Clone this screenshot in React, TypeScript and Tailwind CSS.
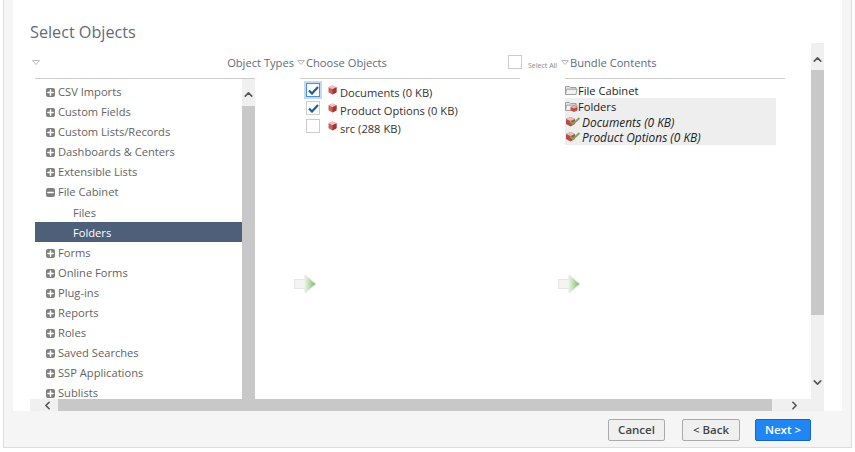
import React from 'react';
import { ChevronUp, ChevronDown, ChevronLeft, ChevronRight, Plus, Minus } from 'lucide-react';

const typesBefore = ['CSV Imports', 'Custom Fields', 'Custom Lists/Records', 'Dashboards & Centers', 'Extensible Lists'];
const typesAfter = ['Forms', 'Online Forms', 'Plug-ins', 'Reports', 'Roles', 'Saved Searches', 'SSP Applications', 'Sublists'];

function Caret({ className = '' }: { className?: string }) {
  return (
    <svg width="8" height="5" viewBox="0 0 8 5" className={`shrink-0 ${className}`}>
      <path d="M0.5 0.5 H7.5 L4 4.5 Z" fill="#fff" stroke="#a8a8b0" strokeWidth="0.8" />
    </svg>
  );
}

function Cube() {
  return (
    <svg width="9" height="10" viewBox="0 0 9 10" className="shrink-0">
      <path d="M4.5 0.5 L8.5 2.3 V7.3 L4.5 9.5 L0.5 7.3 V2.3 Z" fill="#c9605c" />
      <path d="M4.5 0.5 L8.5 2.3 L4.5 4.2 L0.5 2.3 Z" fill="#e8c4c0" />
      <path d="M4.5 4.2 L8.5 2.3 V7.3 L4.5 9.5 Z" fill="#a83232" />
    </svg>
  );
}

function FolderIcon({ withCube = false }: { withCube?: boolean }) {
  return (
    <svg width="13" height="11" viewBox="0 0 13 11" className="shrink-0">
      <path d="M0.5 9.5 V1.5 H4.5 L5.5 2.5 H11 V4" fill="#e4e4e4" stroke="#999" strokeWidth="0.9" />
      <path d="M0.5 9.5 L1.5 4.2 H12 L11 9.5 Z" fill="#f2f2f2" stroke="#999" strokeWidth="0.9" />
      {withCube && (
        <>
          <path d="M9 4.5 L12.5 6 V9.3 L9 11 L5.5 9.3 V6 Z" fill="#c44a46" />
          <path d="M9 4.5 L12.5 6 L9 7.5 L5.5 6 Z" fill="#e3b0ab" />
        </>
      )}
    </svg>
  );
}

function CheckedCube() {
  return (
    <svg width="16" height="11" viewBox="0 0 16 11" className="shrink-0">
      <path d="M5.5 1 L10 3 V8 L5.5 10.5 L1 8 V3 Z" fill="#b94a48" />
      <path d="M5.5 1 L10 3 L5.5 5 L1 3 Z" fill="#e6c0bc" />
      <path d="M5 5.5 L8 8 L14.5 2" fill="none" stroke="#7ea65e" strokeWidth="2" />
    </svg>
  );
}

function GreenArrow() {
  return (
    <svg width="23" height="20" viewBox="0 0 23 20">
      <defs>
        <linearGradient id="arrowFill" x1="0" x2="1" y1="0" y2="0">
          <stop offset="0" stopColor="#f4f4f4" />
          <stop offset="0.45" stopColor="#f2f6f0" />
          <stop offset="0.6" stopColor="#cfe8c6" />
          <stop offset="1" stopColor="#74b85e" />
        </linearGradient>
      </defs>
      <path d="M0.5 5.5 H11 V1 L22 10 L11 19 V14.5 H0.5 Z" fill="url(#arrowFill)" stroke="#e6e6e6" strokeWidth="1" />
    </svg>
  );
}

function TreeIcon({ open = false }: { open?: boolean }) {
  return (
    <span className="flex h-[9px] w-[9px] shrink-0 items-center justify-center rounded-[2px] bg-[#808080] text-white">
      {open ? <Minus size={9} strokeWidth={4} /> : <Plus size={9} strokeWidth={4} />}
    </span>
  );
}

function TreeRow({ label }: { label: string }) {
  return (
    <div className="flex h-5 items-center gap-[3px] pl-[11px] text-[#636363]">
      <TreeIcon />
      <span>{label}</span>
    </div>
  );
}

function ObjectRow({ label, checked, focused, rowClass }: { label: string; checked?: boolean; focused?: boolean; rowClass: string }) {
  return (
    <div className={`flex items-center ${rowClass}`}>
      <span
        className={`flex h-[14px] w-[14px] shrink-0 items-center justify-center border bg-white ${
          focused ? 'border-[#4f8fd0] shadow-[0_0_0_2px_#c3daf0]' : 'border-[#ccc]'
        }`}
      >
        {checked && (
          <svg width="11" height="9" viewBox="0 0 11 9">
            <path d="M1 4.5 L4 7.5 L10 1" fill="none" stroke="#1f5c9e" strokeWidth="2.2" />
          </svg>
        )}
      </span>
      <span className="ml-2">
        <Cube />
      </span>
      <span className="ml-[3px] mt-[6px] text-[#333]">{label}</span>
    </div>
  );
}

function ScrollBtn({ children, className = '' }: { children: React.ReactNode; className?: string }) {
  return <div className={`flex shrink-0 items-center justify-center text-[#555] ${className}`}>{children}</div>;
}

export default function App() {
  return (
    <div
      className="h-[452px] w-[855px] overflow-hidden bg-white pl-[3px] text-[11.15px] leading-4"
      style={{ fontFamily: '"Open Sans", sans-serif' }}
    >
      <div className="flex h-[448px] w-[849px] flex-col border-x border-b border-[#ddd] bg-[#f5f5f5]">
        <div className="mx-[9px] flex h-[411px] w-[829px] shrink-0 flex-col bg-white pl-[17px]">
          <h1 className="h-[43px] pt-[20px] text-[16.2px] leading-6 text-[#5f6b7d]">Select Objects</h1>

          <div className="flex w-[794px]">
            <div className="flex h-[356px] w-[781px] overflow-hidden">
              {/* Object types */}
              <div className="w-[264px] shrink-0">
                <div className="flex h-[35px] items-center justify-between pl-[2px] pt-[4px] text-[#5d6b7f]">
                  <Caret />
                  <span>Object Types</span>
                </div>
                <div className="ml-[5px] flex h-[321px] w-[220px] border-t border-[#ccc]">
                  <div className="w-[207px] overflow-hidden pt-[3px]">
                    {typesBefore.map(t => (
                      <TreeRow key={t} label={t} />
                    ))}
                    <div className="flex h-5 items-center gap-[3px] pl-[11px] text-[#636363]">
                      <TreeIcon open />
                      <span>File Cabinet</span>
                    </div>
                    <div className="flex h-5 items-center pl-[38px] pt-[2px] text-[#636363]">Files</div>
                    <div className="flex h-5 items-center bg-[#4d5f79] pl-[38px] pt-[2px] text-white">Folders</div>
                    <div className="h-px" />
                    {typesAfter.map(t => (
                      <TreeRow key={t} label={t} />
                    ))}
                  </div>
                  <div className="flex w-[13px] flex-col bg-[#f0f0f0]">
                    <ScrollBtn className="h-[27px] pt-[4px]">
                      <ChevronUp size={13} strokeWidth={3} />
                    </ScrollBtn>
                    <div className="flex-1 bg-[#c8c8c8]" />
                  </div>
                </div>
              </div>

              {/* Choose objects */}
              <div className="w-[264px] shrink-0">
                <div className="flex h-[35px] items-center pl-[3px] pt-[4px] text-[#5d6b7f]">
                  <div className="flex w-[211px] items-center">
                    <Caret />
                    <span className="ml-[1px]">Choose Objects</span>
                  </div>
                  <span className="mb-px h-[14px] w-[14px] border border-[#ccc] bg-white" />
                  <span className="ml-[6px] mt-[7px] text-[7px] leading-3 text-[#888]">Select All</span>
                </div>
                <div className="ml-[6px] w-[220px] border-t border-[#ccc] pl-[6px] pt-[2px]">
                  <ObjectRow label="Documents (0 KB)" checked focused rowClass="h-[18px]" />
                  <ObjectRow label="Product Options (0 KB)" checked rowClass="h-[18px]" />
                  <ObjectRow label="src (288 KB)" rowClass="h-[17px]" />
                  <div className="-ml-[12px] mt-[140px]">
                    <GreenArrow />
                  </div>
                </div>
              </div>

              {/* Bundle contents */}
              <div className="w-[253px] shrink-0">
                <div className="flex h-[35px] items-center pl-[3px] pt-[4px] text-[#5d6b7f]">
                  <Caret />
                  <span className="ml-[1px]">Bundle Contents</span>
                </div>
                <div className="ml-[7px] w-[220px] border-t border-[#ccc] pt-[4px]">
                  <div className="flex h-[15px] items-center text-[#222]">
                    <FolderIcon />
                    <span>File Cabinet</span>
                  </div>
                  <div className="w-[211px] bg-[#eee] pb-px pt-px text-[#222]">
                    <div className="flex h-[15px] items-center">
                      <FolderIcon withCube />
                      <span>Folders</span>
                    </div>
                    <div className="flex h-[15px] items-center gap-[1px] text-[11.9px] italic">
                      <CheckedCube />
                      <span>Documents (0 KB)</span>
                    </div>
                    <div className="flex h-[15px] items-center gap-[1px] text-[11.9px] italic">
                      <CheckedCube />
                      <span>Product Options (0 KB)</span>
                    </div>
                  </div>
                  <div className="-ml-[7px] mt-[129px]">
                    <GreenArrow />
                  </div>
                </div>
              </div>
            </div>

            {/* Main vertical scrollbar */}
            <div className="flex h-[356px] w-[13px] flex-col bg-[#f0f0f0]">
              <ScrollBtn className="h-[27px] pt-[6px]">
                <ChevronUp size={13} strokeWidth={3} />
              </ScrollBtn>
              <div className="h-[245px] bg-[#c8c8c8]" />
              <ScrollBtn className="flex-1 items-end pb-[10px]">
                <ChevronDown size={13} strokeWidth={3} />
              </ScrollBtn>
            </div>
          </div>

          {/* Horizontal scrollbar */}
          <div className="flex h-3 w-[794px] bg-[#f0f0f0]">
            <ScrollBtn className="w-7 pl-[6px]">
              <ChevronLeft size={13} strokeWidth={3} />
            </ScrollBtn>
            <div className="w-[714px] bg-[#c8c8c8]" />
            <ScrollBtn className="w-[39px] pl-[5px]">
              <ChevronRight size={13} strokeWidth={3} />
            </ScrollBtn>
          </div>
        </div>

        {/* Footer */}
        <div className="flex flex-1 items-start pl-[604px] pt-[8px] text-[11.5px]">
          <button className="h-[22px] w-[57px] rounded-[2px] border border-[#aaa] bg-[#f0f0f0] font-semibold text-[#444]">Cancel</button>
          <button className="ml-[17px] h-[22px] w-[58px] rounded-[2px] border border-[#aaa] bg-[#f0f0f0] font-semibold text-[#444]">&lt; Back</button>
          <button className="ml-[15px] h-[22px] w-[56px] rounded-[2px] border border-[#1466c8] bg-[#2186f4] font-semibold text-white">Next &gt;</button>
        </div>
      </div>
    </div>
  );
}
